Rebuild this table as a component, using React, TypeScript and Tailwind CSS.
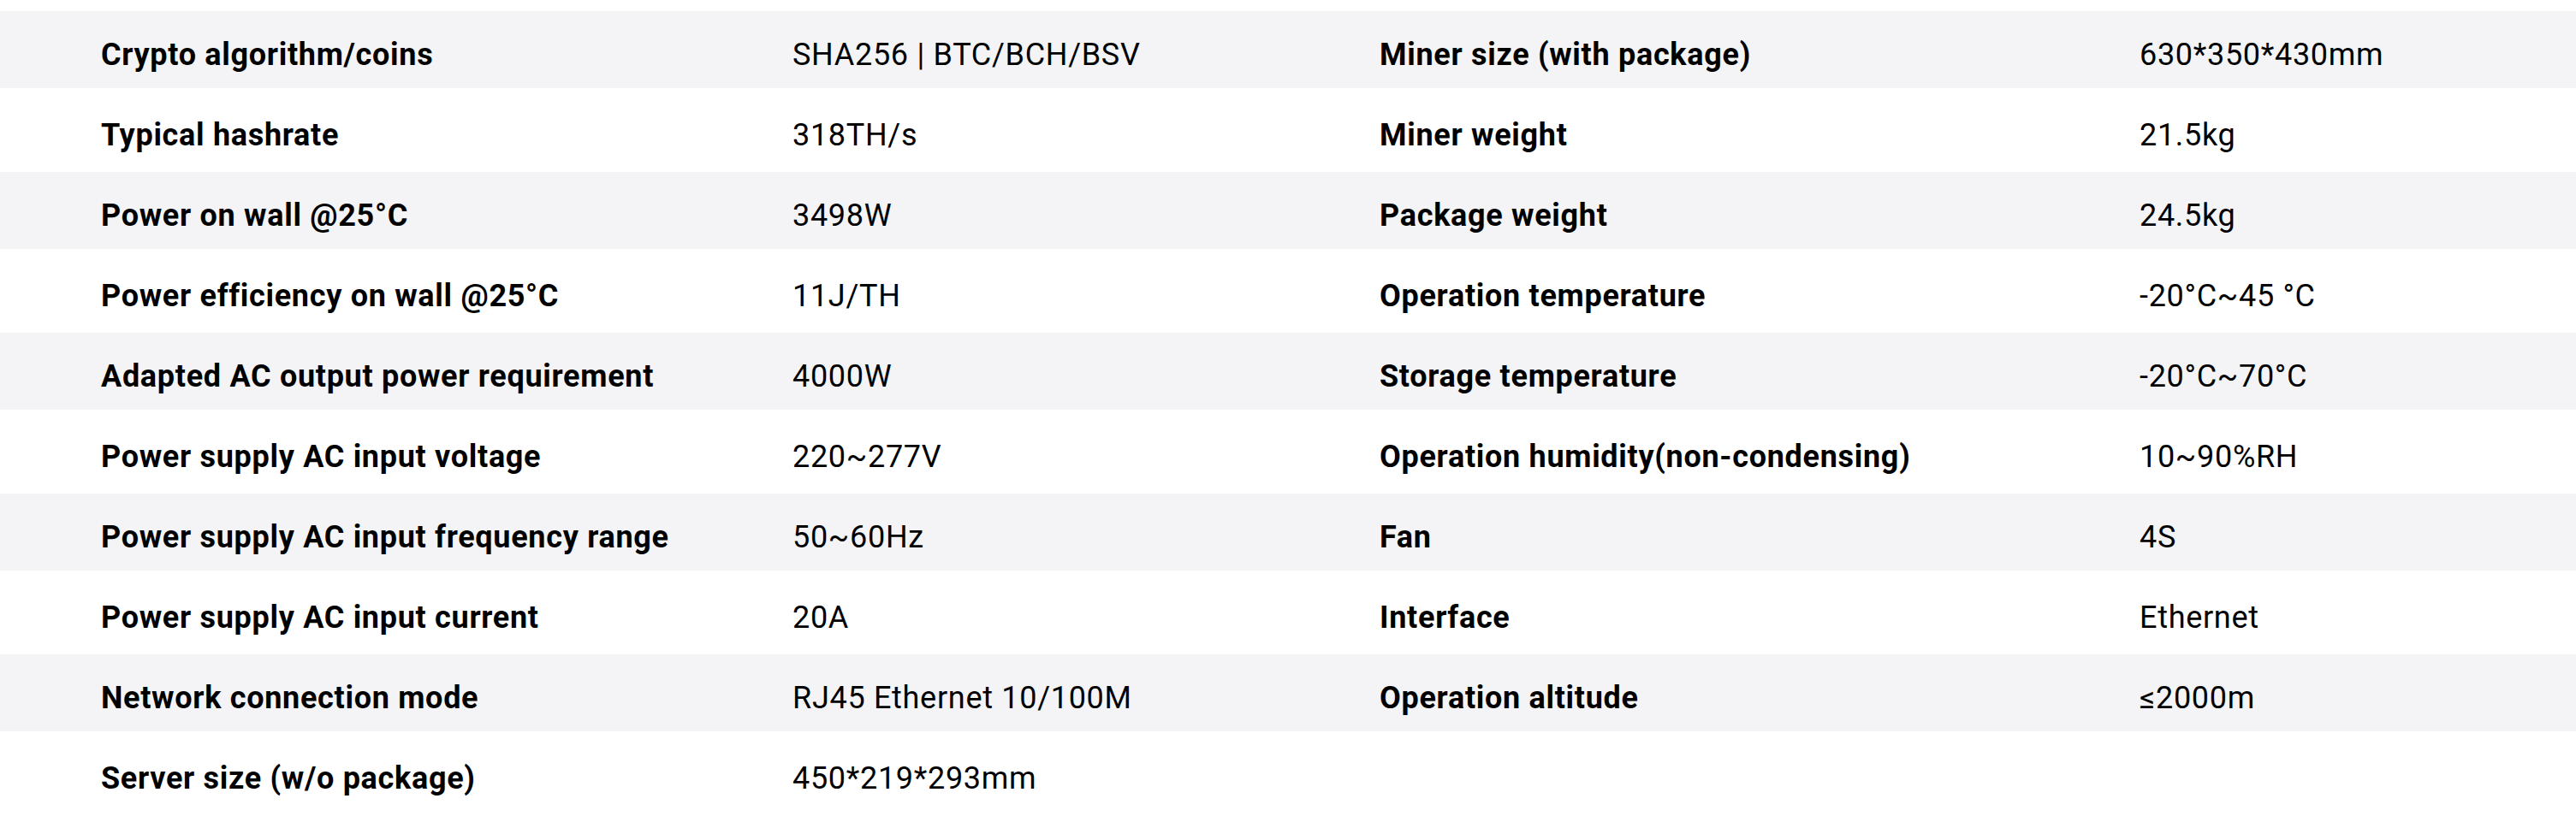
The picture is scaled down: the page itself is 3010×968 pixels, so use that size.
import React from "react";

const specs: [string, string, string, string][] = [
  ["Crypto algorithm/coins", "SHA256 | BTC/BCH/BSV", "Miner size (with package)", "630*350*430mm"],
  ["Typical hashrate", "318TH/s", "Miner weight", "21.5kg"],
  ["Power on wall @25°C", "3498W", "Package weight", "24.5kg"],
  ["Power efficiency on wall @25°C", "11J/TH", "Operation temperature", "-20°C~45 °C"],
  ["Adapted AC output power requirement", "4000W", "Storage temperature", "-20°C~70°C"],
  ["Power supply AC input voltage", "220~277V", "Operation humidity(non-condensing)", "10~90%RH"],
  ["Power supply AC input frequency range", "50~60Hz", "Fan", "4S"],
  ["Power supply AC input current", "20A", "Interface", "Ethernet"],
  ["Network connection mode", "RJ45 Ethernet 10/100M", "Operation altitude", "≤2000m"],
  ["Server size (w/o package)", "450*219*293mm", "", ""],
];

export default function App() {
  return (
    <div className="w-[3010px] h-[968px] overflow-hidden bg-white pt-[13px] font-['Roboto',sans-serif] text-[36px] leading-[42px] tracking-[0.7px] text-black">
      <div className="flex flex-col gap-[4px]">
        {specs.map((row, i) => (
          <SpecRow key={i} row={row} striped={i % 2 === 0} />
        ))}
      </div>
    </div>
  );
}

function SpecRow({ row, striped }: { row: [string, string, string, string]; striped: boolean }) {
  const [k1, v1, k2, v2] = row;
  return (
    <div
      className={`grid h-[90px] grid-cols-[808px_686px_888px_1fr] pl-[118px] pt-[30px] ${
        striped ? "bg-[#f4f4f6]" : "bg-white"
      }`}
    >
      <span className="font-bold">{k1}</span>
      <span>{v1}</span>
      <span className="font-bold">{k2}</span>
      <span>{v2}</span>
    </div>
  );
}
